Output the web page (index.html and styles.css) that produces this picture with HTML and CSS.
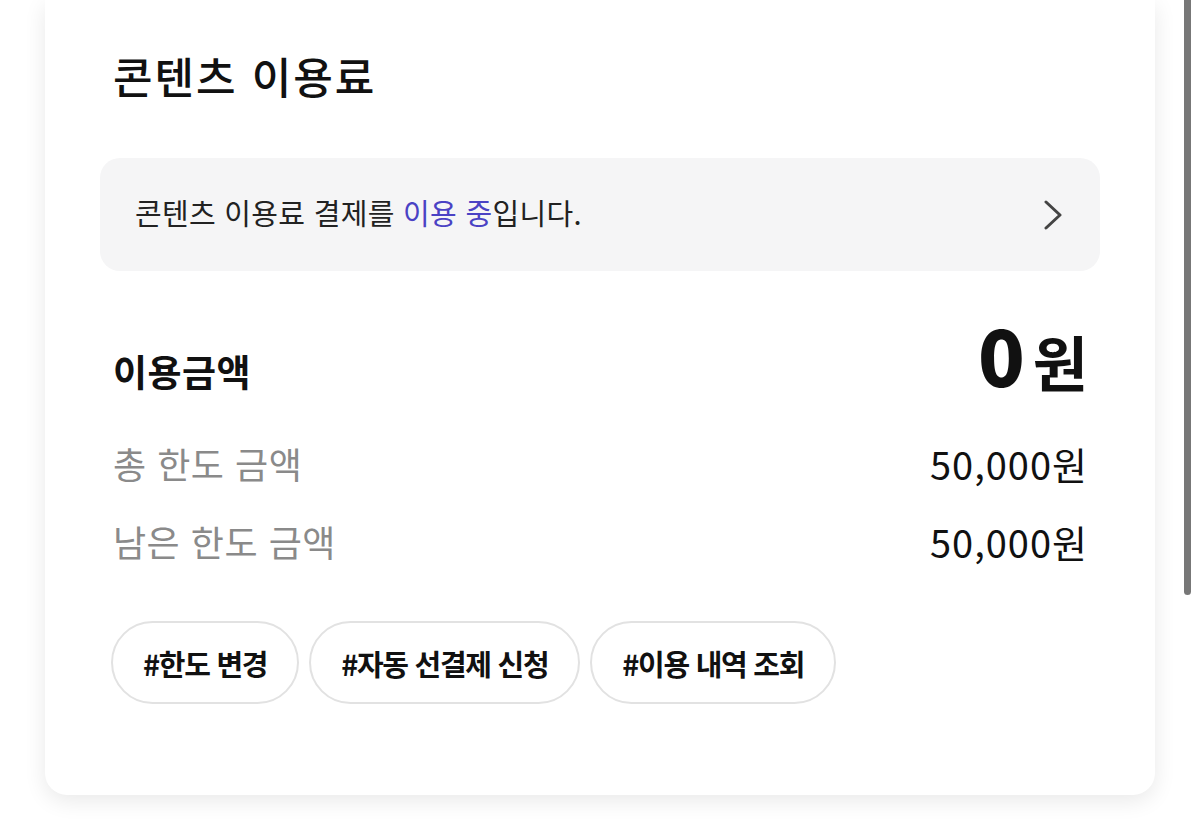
FILE: index.html
```html
<!DOCTYPE html>
<html lang="ko">
<head>
	<meta charset="UTF-8">
	<title>콘텐츠 이용료</title>
	<link rel="stylesheet" href="styles.css">
</head>
<body>
	<div class="page">
		<section class="card">
			<h1 class="card-title">콘텐츠 이용료</h1>

			<a class="notice" href="#">
				<span class="notice-text">콘텐츠 이용료 결제를 <em>이용 중</em>입니다.</span>
				<svg class="chevron" width="20" height="30" viewBox="0 0 20 30">
					<path d="M3 2 L17 15 L3 28" fill="none" stroke="#444" stroke-width="3" stroke-linecap="round" stroke-linejoin="round"/>
				</svg>
			</a>

			<div class="amount">
				<span class="amount-label">이용금액</span>
				<span class="amount-value"><b>0</b>원</span>
			</div>

			<div class="limit-row">
				<span class="limit-label">총 한도 금액</span>
				<span class="limit-value">50,000원</span>
			</div>
			<div class="limit-row">
				<span class="limit-label">남은 한도 금액</span>
				<span class="limit-value">50,000원</span>
			</div>

			<div class="chips">
				<button class="chip">#한도 변경</button>
				<button class="chip">#자동 선결제 신청</button>
				<button class="chip">#이용 내역 조회</button>
			</div>
		</section>
	</div>
	<div class="scroll-thumb"></div>
</body>
</html>
```

FILE: styles.css
```css
body {
	margin: 0;
	background: #fff;
	font-family: "Noto Sans CJK KR", "Noto Sans", sans-serif;
	color: #111;
	overflow: hidden;
}

.page {
	padding: 0 45px 26px 45px;
}

.card {
	background: #fff;
	border-radius: 0 0 22px 22px;
	box-shadow: 0 6px 22px rgba(0, 0, 0, 0.09);
	padding: 47px 55px 91px 55px;
}

.card-title {
	margin: 0 0 55px 13px;
	font-size: 43px;
	line-height: 56px;
	font-weight: 500;
	letter-spacing: 2px;
}

.notice {
	display: flex;
	align-items: center;
	justify-content: space-between;
	height: 113px;
	padding: 0 37px 0 35px;
	background: #f5f5f6;
	border-radius: 20px;
	text-decoration: none;
	color: #222;
}

.notice-text {
	font-size: 29px;
	letter-spacing: 0.3px;
	margin-top: -6px;
}

.notice-text em {
	font-style: normal;
	color: #4a42c4;
}

.amount {
	display: flex;
	align-items: baseline;
	justify-content: space-between;
	margin: 47px 12px 0 13px;
	height: 72px;
}

.amount-label {
	font-size: 37px;
	font-weight: 700;
	letter-spacing: 0.5px;
}

.amount-value {
	font-size: 60px;
	font-weight: 700;
	line-height: 72px;
}

.amount-value b {
	font-size: 77px;
	margin-right: 8px;
}

.limit-row {
	display: flex;
	justify-content: space-between;
	align-items: center;
	margin: 18px 12px 0 13px;
	height: 60px;
	font-size: 36px;
}

.amount + .limit-row {
	margin-top: 43px;
}

.limit-label {
	color: #8a8a8a;
	letter-spacing: 0.5px;
}

.limit-value {
	color: #111;
	font-size: 38px;
	letter-spacing: 1px;
}

.chips {
	display: flex;
	gap: 10px;
	margin: 50px 0 0 11px;
}

.chip {
	height: 83px;
	padding: 0 30px;
	background: #fff;
	border: 2px solid #e2e2e2;
	border-radius: 42px;
	font-family: inherit;
	font-size: 29px;
	font-weight: 700;
	letter-spacing: -1.3px;
	color: #111;
}

.scroll-thumb {
	position: fixed;
	top: 0;
	right: 9px;
	width: 7px;
	height: 595px;
	background: #777;
	border-radius: 0 0 4px 4px;
}
```
